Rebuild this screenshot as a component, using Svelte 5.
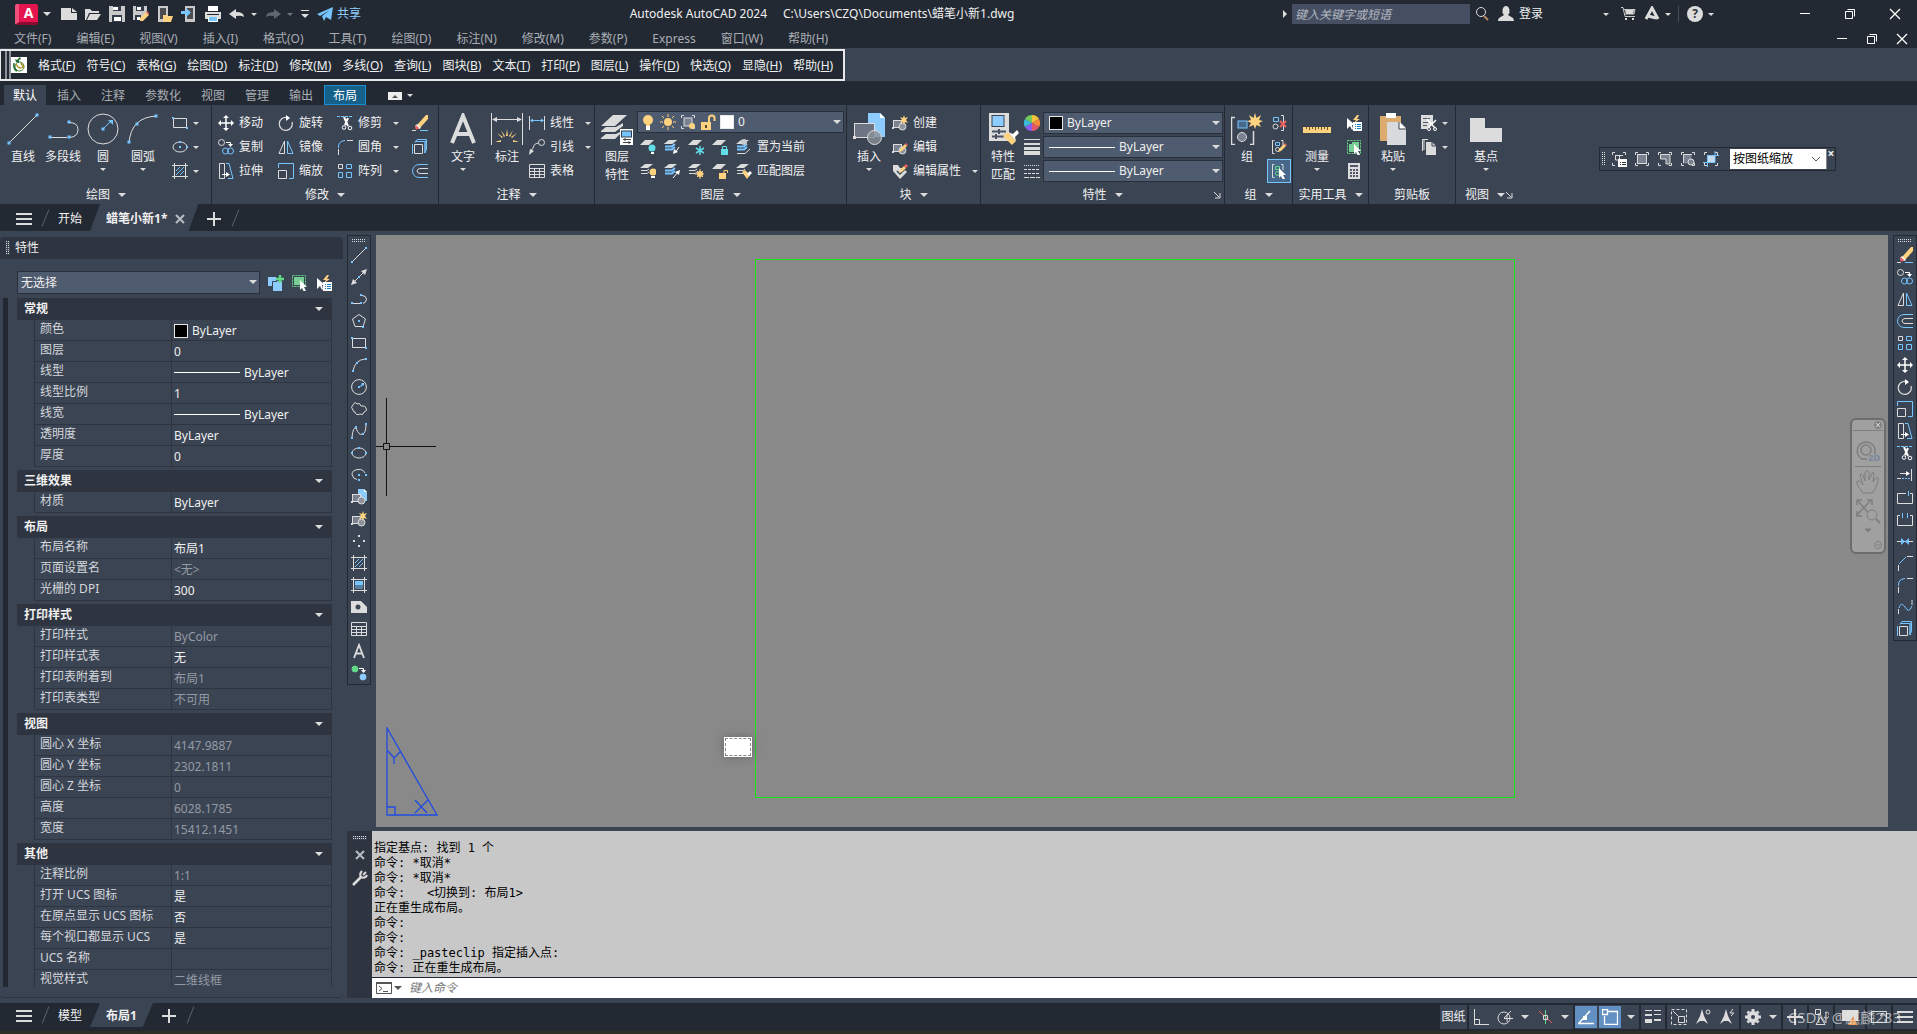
<script lang="ts">
    const W = '#dcdcdc';
    const B = '#76c5ff';
    const Y = '#ffd27f';
    const R = '#f06262';
    const G = '#62d986';
    const D = '#3b4453';

    // Small helpers for the icon table below
    const s = (d: string, color = W, width = 1) =>
        `<path d="${d}" fill="none" stroke="${color}" stroke-width="${width}"/>`;
    const dash = (d: string, pattern: string, color = W) =>
        `<path d="${d}" fill="none" stroke="${color}" stroke-dasharray="${pattern}"/>`;
    const f = (d: string, color = W) => `<path d="${d}" fill="${color}"/>`;
    const o = (cx: number, cy: number, r: number, color = W, fill = 'none') =>
        `<circle cx="${cx}" cy="${cy}" r="${r}" fill="${fill}" stroke="${color}"/>`;
    const dots = (...pts: number[][]) =>
        pts.map(([x, y]) => `<rect x="${x - 1}" y="${y - 1}" width="2" height="2" fill="${B}"/>`).join('');
    const bigDots = (...pts: number[][]) =>
        pts.map(([x, y]) => `<rect x="${x - 1.5}" y="${y - 1.5}" width="3" height="3" fill="${B}"/>`).join('');

    const cursor = f('M8 5V15L10 13L12 17L14 16L12 12H15Z', '#fff');
    const pencil = f('M8 10L13 5L15 7L10 12L7 13Z', Y) + f('M13 5L14 4L16 6L15 7Z', R);
    const star = f('M12 0L13 3L16 2L14 5L16 8L13 7L12 10L11 7L8 8L10 5L8 2L11 3Z', Y);
    const stack = f('M5 1H13L8 5H0Z') + s('M1 7.5H7L9 6M1 10.5H7L9 9');
    const blueStack = f('M5 1H13L8 5H0Z') + s('M1 7.5H8L11 5M1 10.5H8L11 8', B, 2);
    const sheet = f('M5 1H14L9 6H0Z');
    const brackets = s('M3.5 1.5H1.5V14.5H3.5M10 1.5H12V7');
    const bracketIcon = brackets + s('M4.5 3.5H8.5V6.5H4.5Z', B) + o(6.5, 10.5, 2);
    const block = `<rect x="1.5" y="5.5" width="8" height="7" fill="#7a8190" stroke="${W}"/><rect x="0" y="12" width="2" height="2" fill="${W}"/><circle cx="10.5" cy="11.5" r="3.5" fill="#8d929c" stroke="${W}"/>`;
    const corners = s('M1.5 4V1.5H4M12 1.5H14.5V4M14.5 12V14.5H12M4 14.5H1.5V12');
    const frame = s('M0 2.5H16M0 13.5H16M2.5 0V16M13.5 0V16');
    const quickSel = f('M11 0L7 5H10L8 8L14 4H11L13 0Z', Y) + f('M1 3V14L4 11L6 15L7 14L6 10H9Z', '#fff')
        + f('M7 7H16V16H7Z', '#fff') + s('M9 9.5H10M11 9.5H15M9 11.5H10M11 11.5H15M9 13.5H10M11 13.5H15', '#1c7fc4');
    const annoMan = f('M7 0L9 7L13 15L9 12H5L1 15L5 7Z');

    const icons: Record<string, string> = {
        // quick access toolbar
        newFile: f('M0 2H10V7H16V14H0Z') + f('M11 2L16 6H11Z'),
        open: f('M0 3H5L7 5H14V7H4L1 14H0Z') + f('M5 8H16L12 14H2Z'),
        save: f('M0 0H16V16H0Z', '#c9c9c9') + f('M4 0H12V5H4Z', '#333b48') + f('M3 9H13V16H3Z', '#333b48') + f('M4 1H9V4H4ZM5 11H12V15H5Z', '#fff'),
        saveAs: f('M0 0H14V6L7 14H0Z', '#c9c9c9') + f('M3 0H11V5H3Z', '#333b48') + f('M2 9H8V14H2Z', '#333b48') + f('M4 1H8V4H4ZM4 11H7V14H4Z', '#fff') + f('M7 12L13 6L16 9L10 15L7 15Z', Y) + f('M13 6L14 5L16 7L16 9Z', R),
        openWeb: f('M1 0H11V16H1Z', '#c9c9c9') + f('M3 2H9V13H3Z', '#4c4c50') + f('M6 9H10L11 10H16L14 16H6Z', Y),
        saveWeb: f('M4 0H14V16H4Z', '#c9c9c9') + f('M6 2H12V13H6Z', '#4c4c50') + f('M0 5H5V2L10 6.5L5 11V8H0Z', B),
        print: f('M3 0H13V5H3Z', '#fff') + f('M0 6H16V13H0Z') + f('M2 8H14V9H2Z', '#222933') + f('M3 11H13V16H3Z', B) + s('M3.5 11V15.5H12.5V11', '#fff'),
        undo: f('M0 8L7 3V6Q15 6 15 11Q12 9 7 10V13Z'),
        redo: f('M16 8L9 3V6Q1 6 1 11Q4 9 9 10V13Z', '#5f6670'),
        share: f('M0 8L16 1L14 14L9 11L7 15L5 10L13 4L3 10Z', B),
        search: o(6, 6, 4.5) + s('M9 10L13 14', '#b58a62', 2),
        user: f('M8 0A4 5 0 0 1 10 9L15 12Q16 14 16 15H0Q0 13 1 12L6 9A4 5 0 0 1 8 0Z'),
        cart: s('M0 1.5H2L4 10.5H14M3 3.5H14L13 8H4', '#c9c9c9') + f('M4 12H6V14H4ZM11 12H13V14H11ZM4 4H13L12 8H5Z'),
        autodesk: s('M2 13L8 2L14 13M4 10L12 12', W, 3),
        min: s('M3 7.5H13', '#fff'),
        restore: s('M3.5 5.5H10.5V12.5H3.5ZM5.5 3.5H12.5V10.5', '#fff'),
        close: s('M3 3L13 13M13 3L3 13', '#fff', 1.3),
        menu: s('M0 3H16M0 8H16M0 13H16', W, 2),
        plus: s('M1 8H15M8 1V15', W, 2),
        x: s('M4 4L12 12M12 4L4 12', '#b8bdc4', 2),
        macro: f('M0 0H16V16H0Z', '#fff') + o(8.5, 9.5, 4.5, '#2f7d32') + s('M5 7Q8 13 12 10M10 6L13 11', '#b09a2a', 1.5) + f('M9 0L6 3L4 2L5 5L8 6L8 3L10 2Z', '#1d6b2d') + s('M3 6Q2 12 6 14', '#1d6b2d', 1.5),

        // draw, large
        lineBig: s('M2 30L30 2') + bigDots([2, 30], [30, 2]),
        plineBig: s('M3 24.5H20M22 9.5Q31 9.5 31 16.5Q31 24 22 24.5') + bigDots([3, 24], [22, 9], [22, 24]),
        circleBig: o(16, 16, 15) + s('M17 15L23 9', B) + f('M21 7H26V12Z', B) + bigDots([16, 16]),
        arcBig: s('M2 30Q4 4 30 3') + bigDots([2, 29], [10, 11], [29, 3]),
        // draw, small
        line: s('M1 15L15 1') + dots([1, 15], [15, 1]),
        xline: s('M3 13L13 3') + f('M0 16L2 10L6 14ZM16 0L10 2L14 6Z') + dots([8, 8]),
        pline: s('M2 12.5H9M11 4.5Q15 4.5 15.5 8Q15 12 12 12.5') + dots([1, 12], [10, 4], [10, 12]),
        polygon: s('M8 1.5L14.5 6L12 13.5H4L1.5 6Z') + dots([8, 8], [12, 14]),
        rect: s('M1.5 3.5H14.5V12.5H1.5Z') + dots([1, 3], [15, 13]),
        arc: s('M2 14Q4 3 14 2') + dots([2, 14], [6, 6], [15, 2]),
        circle: o(8, 8, 7.4) + f('M9 7L11 5L10 4H13V7L12 6L10 8Z', B) + dots([8, 8]),
        cloud: s('M2 9Q-1 6 2 4Q4 0 6 3Q9 1 10 5Q14 4 15 7Q17 10 13 11Q12 15 9 13Q5 15 4 11Q2 11 2 9Z'),
        spline: s('M1 14Q2 4 5 5Q8 13 11 11Q15 11 15 1') + dots([1, 15], [5, 4], [12, 11], [15, 1]),
        ellipse: '<ellipse cx="8" cy="8" rx="7" ry="5" fill="none" stroke="#dcdcdc"/>' + dots([1, 8], [8, 3], [15, 8]),
        ellipseMid: '<ellipse cx="8" cy="8" rx="7" ry="5" fill="none" stroke="#dcdcdc"/>' + dots([8, 3], [8, 8], [15, 8]),
        ellipseArc: s('M14 6Q12 2 7 2.5Q1 3 1 7.5Q2 12 6 12.5') + dots([8, 8], [15, 8], [8, 13]),
        insert: f('M7 0H13L16 3V12H7Z', '#8cccff') + f('M13 0L16 3H13Z', '#fff') + block,
        create: block + star,
        editBlock: block + pencil,
        editAttr: f('M1 2H6L8 5L11 5L15 9L8 16L1 8Z') + s('M5 8L8 11L13 6', D, 1.5) + f('M8 7L12 3L14 5L10 9L7 10Z', Y) + f('M12 3L14 1L16 3L14 5Z', R),
        point: f('M7 2H9V4H7ZM2 7H4V9H2ZM12 7H14V9H12ZM7 12H9V14H7Z'),
        hatch: frame + s('M4 8L8 4M4 12L12 4M8 12L12 8', B),
        gradient: f('M4 4H12V8H4Z', B) + f('M4 8H12V12H4Z', '#587f9f') + frame,
        region: f('M0 2H10L16 8V14H0Z') + `<circle cx="7" cy="8" r="2.5" fill="${D}"/>`,
        table: s('M0.5 1.5H15.5V14.5H0.5ZM0 5.5H16M0 8.5H16M0 11.5H16M5.5 5V15M10.5 5V15'),
        textA: s('M3 15L8 2L13 15M5 10.5H11', W, 1.8),
        addSel: o(4, 4, 3, G, G) + o(12, 12, 3, '#8cccff', '#8cccff') + s('M8 3.5H12.5V6', '#fff') + f('M10 5H15L12.5 8Z', '#fff'),

        // modify
        move: s('M2 8H14M8 2V14', '#fff', 1.5) + f('M0 8L3 5V11ZM16 8L13 5V11ZM8 0L5 3H11ZM8 16L5 13H11Z', '#fff'),
        copy: o(3.5, 3.5, 3) + s('M8 3.5H12.5V5', '#fff') + f('M10 5H15L12.5 8Z', '#fff') + o(7.5, 12, 3, B) + o(12.5, 12, 3, B),
        rotate: s('M9 2.5A6.5 6.5 0 1 0 14 7', W, 1.2) + f('M8 0L12 3L8 6Z', '#fff'),
        mirror: s('M6.5 2V14.5H1Z') + s('M9.5 2V14.5H15Z', B),
        stretch: s('M1.5 0.5H6.5V15.5H1.5Z') + s('M8 0.5H11L15 15.5H10', B) + s('M4 11.5H9', '#fff') + f('M8 9L12 11.5L8 14Z', '#fff'),
        scale: s('M0.5 5V0.5H15.5V15.5H11', B) + s('M0.5 7.5H8.5V15.5H0.5Z'),
        trim: dash('M0 1.5H16', '3 1', B) + s('M7 2L11 11M11 3L8 10', '#fff', 2) + o(7, 12.5, 1.8, '#fff') + o(13, 13, 1.8, '#fff'),
        fillet: s('M1.5 9Q1 2 8 1.5', B) + s('M10 1.5H16M1.5 10V16'),
        chamfer: s('M2 9L9 2', B) + s('M10 1.5H16M1.5 10V16'),
        array: s('M1.5 1.5H5.5V5.5H1.5Z') + s('M9.5 1.5H14.5V5.5H9.5ZM1.5 9.5H5.5V14.5H1.5ZM9.5 9.5H14.5V14.5H9.5Z', B),
        erase: f('M5 10L14 0H16V4L8 13Z', Y) + f('M5 9L9 13L7 14L3 11Z', '#fff') + f('M4 10L7 13Q5 16 3 13Z', R) + s('M0 15.5H4') + s('M8 15.5H16', B),
        explode: s('M2.5 5.5H10.5V14.5H2.5Z') + s('M0.5 15V5M3 3.5L5 0.5H14.5V10L13 14V4.5L14.5 1M3 2.5H13V14', B),
        offset: s('M16 1.5H7Q1 2 0.5 8Q1 14 7 14.5H16', B) + s('M16 5.5H8Q5 6 5 8Q5 10 8 10.5H16'),
        extend: s('M14.5 2V14M3 6.5H10') + f('M9 4L13 6.5L9 9Z', '#fff') + s('M0 11.5H4') + dash('M5 11.5H13', '2 1', B),
        breakPt: s('M9 4.5H0.5V14.5H15.5V4.5H13') + s('M11.5 2V7', B),
        breakTwo: s('M3 4.5H0.5V14.5H15.5V4.5H13') + s('M5.5 2V7M10.5 2V7', B),
        join: s('M0 8.5H16') + f('M4 5L8 8.5L4 12ZM12 5L8 8.5L12 12Z', B),
        blend: s('M1.5 15V10M15 1V6') + s('M2 9Q4 2 8 8Q12 15 15 7', B),

        // annotate
        textBig: s('M5 30L16 3L27 30M9 21H23', W, 4),
        dimBig: s('M0.5 0V32M31.5 0V32M2 6.5H30') + f('M1 6.5L6 4V9ZM31 6.5L26 4V9Z') + f('M15 23L16 16L17 23ZM6 20L12 24L11 25ZM26 20L20 24L21 25ZM4 29L10 27V29ZM28 29L22 27V29ZM10 17L14 23L13 24ZM22 17L18 23L19 24Z', Y),
        linear: s('M0.5 1V15M15.5 1V15') + s('M2 5.5H14', B) + f('M1 5.5L4 3.5V7.5ZM15 5.5L12 3.5V7.5Z', B),
        leader: o(12.5, 3.5, 3) + s('M9.5 4.5Q6 3 4 9L1 13') + f('M0 16L1 10L5 12Z'),

        // layers
        layerBig: f('M12 2H26L14 13H0ZM0 18L5 14H15L22 10V13L14 19H0ZM0 25L5 21H15L19 19V21L14 26H0Z') + f('M19 16H32V32H19Z', '#fff') + `<rect x="20.5" y="18" width="10" height="6" fill="${B}" stroke="#333b48"/>` + s('M22 26.5H30M22 29.5H30M24 25V28M28 28V31', '#444'),
        bulb: `<circle cx="8" cy="6" r="5" fill="${Y}"/>` + f('M6 10H10V12H6Z', Y) + f('M6 12H10V16H6Z', '#fff'),
        sun: `<circle cx="8" cy="8" r="4" fill="${Y}"/>` + s('M8 0V3M8 13V16M0 8H3M13 8H16M2 2L4 4M12 12L14 14M14 2L12 4M2 14L4 12', Y),
        vpSun: corners + `<rect x="4" y="4" width="8" height="8" fill="#7a8190" stroke="${W}"/><circle cx="12" cy="12" r="3" fill="${Y}"/>`,
        lockOpen: f('M1 8H11V16H1Z', Y) + s('M9 9V4Q9 1.5 12 1.5Q14.5 1.5 14.5 4V7', Y, 2) + f('M5 11H7V14H5Z', '#5a4a25'),
        layOff: sheet + '<circle cx="12" cy="9" r="3.5" fill="#62dce8"/>' + f('M11 13H14V15H11Z', '#fff'),
        layIso: stack + blueStack + s('M15 8L11 14', '#fff') + f('M9 15L10 10L14 13Z', '#fff'),
        layFreeze: sheet + s('M12 7V16M8 9L16 14M16 9L8 14', '#62dce8', 1.5),
        layLock: sheet + f('M9 10H16V16H9Z', '#62dce8') + s('M10.5 10V7.5H14.5V10', '#62dce8'),
        layCur: blueStack + s('M1 14.5H9L14 10') + '<circle cx="8" cy="3" r="3" fill="#c8ccd2"/>',
        layOn: stack + `<circle cx="13" cy="9" r="3.5" fill="${Y}"/>` + f('M11 13H15V15H11Z', '#fff'),
        layUniso: blueStack + s('M9 15L14 9', '#fff') + f('M16 7L15 12L11 9Z', '#fff'),
        layThaw: stack + `<circle cx="12" cy="11" r="3" fill="${Y}"/>` + s('M12 6V16M7 11H16M9 8L15 14M15 8L9 14', Y),
        layUnlock: sheet + f('M7 10H14V16H7Z', Y) + s('M12 10V7.5H15.5V10', Y),
        layMatch: stack + f('M6 9L9 7L14 12L11 16Z', Y) + f('M11 11L14 8L16 10L13 13Z', '#fff'),

        // block, properties
        insertBig: f('M15 0H27L32 5V24H15Z', '#8cccff') + f('M27 0L32 5H27Z', '#fff') + `<rect x="1.5" y="10.5" width="20" height="14" fill="#6d7584" stroke="${W}"/><rect x="0" y="23" width="3" height="3" fill="${W}"/><circle cx="21.5" cy="24.5" r="7" fill="#8a9099" fill-opacity=".8" stroke="${W}"/>`,
        matchBig: f('M2 0H22V28H2Z') + '<rect x="5" y="2.5" width="12" height="11" fill="#8cccff" stroke="#3b4453"/>' + s('M5 18.5H11M13 18.5H19M5 23.5H8M10 23.5H17M12 16V21M9 21V26', '#4a5361', 2) + f('M16 23L21 19L29 28L25 32Z', Y) + f('M21 19L26 21L30 17L32 20L28 24L29 28Z', '#fff'),
        wheel: f('M8 8V0A8 8 0 0 1 15 4Z', '#f7c33c') + f('M8 8L15 4A8 8 0 0 1 15 12Z', '#f58a3c') + f('M8 8L15 12A8 8 0 0 1 8 16Z', '#e5586b') + f('M8 8V16A8 8 0 0 1 1 12Z', '#8d5cf0') + f('M8 8L1 12A8 8 0 0 1 1 4Z', '#3cb8d8') + f('M8 8L1 4A8 8 0 0 1 8 0Z', '#74c95c'),
        lweight: s('M0 0.5H16') + s('M0 5H16', W, 2) + s('M0 9.5H16', W, 3) + s('M0 14H16', W, 4),
        ltype: dash('M0 2.5H16', '1 1') + dash('M0 6.5H16M0 10.5H16', '3 1') + dash('M0 14.5H16', '5 1'),

        // group, utilities, clipboard, view
        groupBig: s('M4 4.5H0.5V31.5H4M19 31.5H22.5V18', W, 1.5) + `<rect x="7" y="8" width="9" height="7" fill="#47688a" stroke="${B}"/><circle cx="11" cy="24" r="4.5" fill="#7a8190" stroke="${W}"/>` + f('M24 0L25.5 5L30 2L28 7L32 8L28 10L30 14L25.5 12L24 16L22.5 12L18 14L20 10L16 8L20 7L18 2L22.5 5Z', Y),
        ungroup: s('M2.5 2.5H7.5V6.5H2.5Z', B) + o(4.5, 11.5, 2.5) + s('M10 0.5H12.5V15.5H10') + s('M9 6L15 12M15 6L9 12', R, 2),
        groupEdit: bracketIcon + pencil,
        groupSel: brackets + s('M4.5 3.5H8.5V6.5H4.5Z', G) + o(6.5, 10.5, 2, G) + cursor,
        rulerBig: f('M2 14H30V20H2Z', Y) + s('M5.5 14V16M8.5 14V17M11.5 14V16M14.5 14V17M17.5 14V16M20.5 14V17M23.5 14V16M26.5 14V17', '#6b5524'),
        quickSel,
        selectAll: `<rect x="1.5" y="1.5" width="13" height="13" fill="none" stroke="${G}" stroke-dasharray="2 1"/>` + f('M3 5H6V3H13V10H10V13H3Z', '#78cf95') + cursor,
        calc: f('M2 0H14V16H2Z') + f('M4 2H12V4H4ZM4 6H6V8H4ZM7 6H9V8H7ZM10 6H12V8H10ZM4 9H6V11H4ZM7 9H9V11H7ZM10 9H12V11H10ZM4 12H6V14H4ZM7 12H9V14H7ZM10 12H12V14H10Z', '#4f5969'),
        pasteBig: f('M3 3H24V28H3Z', '#dbab70') + f('M9 0H19V5H9Z', '#fff') + f('M10 9H23L29 15V32H10Z', '#d8dade') + f('M22 9L29 16H22Z', '#fff') + s('M22 9V16H29', D),
        cut: f('M0 0H12V8L6 14H0Z') + s('M2 3.5H9M2 7.5H7M2 10.5H6', '#4f5969') + s('M6 4L14 13M15 5L8 12', '#fff', 1.5) + o(8, 14, 1.5, '#fff') + o(14, 14, 1.5, '#fff'),
        copyClip: s('M1.5 12V0.5H7M3 1V11') + f('M5 3H11L15 7V16H5Z') + s('M11 3V7H15', D),
        baseBig: f('M0 5H15V15H32V29H0Z'),

        // palette header
        pickAdd: f('M0 2H8V11H0Z', '#8cccff') + f('M5 6H14V16H5Z', '#8cccff') + s('M4.5 11V6.5H9', D) + s('M12 0V8M8 4H16', G, 2.5),
        selectObj: `<rect x=".5" y=".5" width="13" height="11" fill="none" stroke="${G}" stroke-dasharray="2 1"/>` + f('M2 2H12V10H2Z', '#78cf95') + cursor,

        // viewport toolbar
        vpDialog: corners + s('M4 4.5H12M4.5 4V9H8M8.5 4V8') + f('M7 8H16V16H7Z', '#fff') + s('M9 11.5H10M11 11.5H15M9 13.5H10M11 13.5H15', '#333'),
        vpSingle: corners + `<rect x="3.5" y="3.5" width="9" height="9" fill="#7a8190" stroke="${W}"/>`,
        vpPoly: corners + `<path d="M3.5 3.5H13V13H9V8H3.5Z" fill="#7a8190" stroke="${W}"/>`,
        vpObj: corners + '<rect x="3.5" y="3.5" width="8" height="9" fill="#7a8190"/>' + s('M3.5 12V3.5H12') + o(11, 11, 3, W, '#7a8190'),
        vpClip: corners + f('M4 4H12V12H4Z', '#c5dcf0') + s('M0 11.5H12V0M4.5 16V4.5H16', B),
        chevron: s('M4 6L8 10L12 6', '#555'),

        // status bar
        ortho: s('M1.5 0V15.5H16M1.5 10.5H6.5V15'),
        polar: o(7, 9, 6) + s('M7 9.5H16M7 9L14 2') + s('M10 5.5V13'),
        iso: s('M2 2L15 14', R) + s('M8.5 1V15', G) + s('M6.5 6.5H10.5V10.5H6.5Z'),
        otrack: s('M0 14.5H16M1 14L12 2', '#fff', 1.5) + f('M5 7H9V11H5Z', '#fff'),
        osnap: s('M6 2.5H15.5V15.5H2.5V7M0.5 0.5H5.5V5.5H0.5Z', '#fff', 1.3),
        lwt: s('M0 1.5H7M9 1.5H16') + s('M0 6H7', W, 2) + s('M9 5.5H16') + s('M0 12H7', W, 4) + s('M9 11H16', W, 2),
        selCycle: dash('M0.5 0.5H15.5V15.5H0.5Z', '3 2') + s('M7.5 7.5H13.5V13.5H7.5ZM2 2L7 7'),
        annoVis: annoMan + o(13, 3, 2),
        annoAuto: annoMan + s('M14 0L11 4H15L12 7'),
        gear: '<circle cx="8" cy="8" r="4" fill="none" stroke="#dcdcdc" stroke-width="4"/>' + s('M8 0V3M8 13V16M0 8H3M13 8H16M2.5 2.5L4 4M12 12L13.5 13.5M13.5 2.5L12 4M2.5 13.5L4 12', W, 3),
        cross: s('M0 8H16M8 0V16', W, 2),
        isolate: s('M2.5 0.5H7.5V5.5H2.5ZM7.5 8L12 15.5H3ZM12 3.5A3 3 0 1 1 11 8'),
        hw: f('M0 1H16V12H0Z') + f('M11 7L16 16H6Z', '#e79350'),
        clean: s('M0.5 2.5H15.5V13.5H0.5Z') + s('M9 7L13 4M10 4.5H13V7'),
        wrench: s('M1 15L9 7', W, 2.5) + s('M14 2L11 5M10 1Q7 4 9 7Q13 9 15 5', W, 2),
        prompt: s('M0.5 2.5H15.5V13.5H0.5Z', '#555') + s('M0 3H16', '#555', 2) + s('M3 6L6 8.5L3 11M7 11.5H12', '#555')
    };

    const quickAccess = ['newFile', 'open', 'save', 'saveAs', 'openWeb', 'saveWeb', 'print'];
    const menus = ['文件(F)', '编辑(E)', '视图(V)', '插入(I)', '格式(O)', '工具(T)', '绘图(D)', '标注(N)', '修改(M)', '参数(P)', 'Express', '窗口(W)', '帮助(H)'];
    const macroMenus = [
        ['格式', 'F'], ['符号', 'C'], ['表格', 'G'], ['绘图', 'D'], ['标注', 'D'], ['修改', 'M'], ['多线', 'O'], ['查询', 'L'],
        ['图块', 'B'], ['文本', 'T'], ['打印', 'P'], ['图层', 'L'], ['操作', 'D'], ['快选', 'Q'], ['显隐', 'H'], ['帮助', 'H']
    ];
    const tabs = ['默认', '插入', '注释', '参数化', '视图', '管理', '输出', '布局'];

    const drawTools = ['line', 'xline', 'pline', 'polygon', 'rect', 'arc', 'circle', 'cloud', 'spline', 'ellipse', 'ellipseArc', 'insert', 'create', 'point', 'hatch', 'gradient', 'region', 'table', 'textA', 'addSel'];
    const modifyTools = ['erase', 'copy', 'mirror', 'offset', 'array', 'move', 'rotate', 'scale', 'stretch', 'trim', 'extend', 'breakPt', 'breakTwo', 'join', 'chamfer', 'fillet', 'blend', 'explode'];

    type Row = { label: string; value: string; mark?: 'swatch' | 'line'; off?: boolean };
    const groups: { name: string; rows: Row[] }[] = [
        {
            name: '常规',
            rows: [
                { label: '颜色', value: 'ByLayer', mark: 'swatch' },
                { label: '图层', value: '0' },
                { label: '线型', value: 'ByLayer', mark: 'line' },
                { label: '线型比例', value: '1' },
                { label: '线宽', value: 'ByLayer', mark: 'line' },
                { label: '透明度', value: 'ByLayer' },
                { label: '厚度', value: '0' }
            ]
        },
        { name: '三维效果', rows: [{ label: '材质', value: 'ByLayer' }] },
        {
            name: '布局',
            rows: [
                { label: '布局名称', value: '布局1' },
                { label: '页面设置名', value: '<无>', off: true },
                { label: '光栅的 DPI', value: '300' }
            ]
        },
        {
            name: '打印样式',
            rows: [
                { label: '打印样式', value: 'ByColor', off: true },
                { label: '打印样式表', value: '无' },
                { label: '打印表附着到', value: '布局1', off: true },
                { label: '打印表类型', value: '不可用', off: true }
            ]
        },
        {
            name: '视图',
            rows: [
                { label: '圆心 X 坐标', value: '4147.9887', off: true },
                { label: '圆心 Y 坐标', value: '2302.1811', off: true },
                { label: '圆心 Z 坐标', value: '0', off: true },
                { label: '高度', value: '6028.1785', off: true },
                { label: '宽度', value: '15412.1451', off: true }
            ]
        },
        {
            name: '其他',
            rows: [
                { label: '注释比例', value: '1:1', off: true },
                { label: '打开 UCS 图标', value: '是' },
                { label: '在原点显示 UCS 图标', value: '否' },
                { label: '每个视口都显示 UCS', value: '是' },
                { label: 'UCS 名称', value: '' },
                { label: '视觉样式', value: '二维线框', off: true }
            ]
        }
    ];

    const history = [
        '指定基点: 找到 1 个',
        '命令: *取消*',
        '命令: *取消*',
        '命令:   <切换到: 布局1>',
        '正在重生成布局。',
        '命令:',
        '命令:',
        '命令: _pasteclip 指定插入点:',
        '命令: 正在重生成布局。'
    ].join('\n');

    let command = $state('');
    let keyword = $state('');
    let activeTab = $state('默认');
</script>

{#snippet icon(name: string, size = 16)}
    <svg width={size} height={size} viewBox="0 0 {size} {size}" aria-hidden="true">{@html icons[name]}</svg>
{/snippet}

{#snippet big(name: string, lines: string[], drop = false)}
    <button class="big">
        {@render icon(name, 32)}
        {#each lines as line}<span>{line}</span>{/each}
        {#if drop}<i class="arrow"></i>{/if}
    </button>
{/snippet}

{#snippet tool(name: string, label = '', drop = false)}
    <button class="tool" aria-label={label || name}>
        {@render icon(name)}
        {#if label}<span>{label}</span>{/if}
        {#if drop}<i class="arrow"></i>{/if}
    </button>
{/snippet}

{#snippet title(name: string, drop = true, launcher = false)}
    <div class="panel-title">
        <button>{name}{#if drop}<i class="arrow wide"></i>{/if}</button>
        {#if launcher}
            <button class="launcher" aria-label="{name}设置">
                <svg width="8" height="8" viewBox="0 0 8 8"><path d="M1 1L6 6M7 2V7H2" fill="none" stroke="#dcdcdc" /></svg>
            </button>
        {/if}
    </div>
{/snippet}

<div class="app">
    <header class="titlebar">
        <button class="logo" aria-label="应用程序菜单">A</button>
        <i class="arrow wide"></i>
        <div class="quick">
            {#each quickAccess as name}
                <button aria-label={name}>{@render icon(name)}</button>
            {/each}
            <button aria-label="undo">{@render icon('undo')}<i class="arrow"></i></button>
            <button aria-label="redo">{@render icon('redo')}<i class="arrow dim"></i></button>
            <button class="customize" aria-label="自定义"><i class="arrow wide"></i></button>
        </div>
        <button class="share">{@render icon('share')}共享</button>
        <h1><span>Autodesk AutoCAD 2024</span><span>C:\Users\CZQ\Documents\蜡笔小新1.dwg</span></h1>
        <i class="caret-right"></i>
        <input class="search" type="text" aria-label="搜索" placeholder="键入关键字或短语" bind:value={keyword} />
        <button aria-label="搜索">{@render icon('search')}</button>
        <button class="login">{@render icon('user')}登录<i class="arrow"></i></button>
        <button aria-label="购物车">{@render icon('cart')}</button>
        <button class="pair" aria-label="Autodesk App">{@render icon('autodesk')}<i class="arrow"></i></button>
        <button class="pair help" aria-label="帮助"><b>?</b><i class="arrow"></i></button>
        <div class="window">
            <button aria-label="最小化">{@render icon('min')}</button>
            <button aria-label="还原">{@render icon('restore')}</button>
            <button aria-label="关闭">{@render icon('close')}</button>
        </div>
    </header>

    <nav class="menubar">
        {#each menus as item}<button>{item}</button>{/each}
        <div class="window doc">
            <button aria-label="最小化文档">{@render icon('min')}</button>
            <button aria-label="还原文档">{@render icon('restore')}</button>
            <button aria-label="关闭文档">{@render icon('close')}</button>
        </div>
    </nav>

    <div class="macrobar">
        <div class="macros">
            {@render icon('macro')}
            {#each macroMenus as [name, key]}<button>{name}(<u>{key}</u>)</button>{/each}
        </div>
    </div>

    <nav class="tabs">
        {#each tabs as tab}
            <button class:active={activeTab === tab} class:layout={tab === '布局'} onclick={() => (activeTab = tab)}>{tab}</button>
        {/each}
        <span class="collapse"><i></i></span>
        <i class="arrow"></i>
    </nav>

    <div class="ribbon">
        <section class="draw">
            <div class="tools">
                {@render big('lineBig', ['直线'])}
                {@render big('plineBig', ['多段线'])}
                {@render big('circleBig', ['圆'], true)}
                {@render big('arcBig', ['圆弧'], true)}
                <div class="stack">
                    {@render tool('rect', '', true)}
                    {@render tool('ellipseMid', '', true)}
                    {@render tool('hatch', '', true)}
                </div>
            </div>
            {@render title('绘图')}
        </section>

        <section class="modify">
            <div class="tools">
                <div class="grid">
                    {@render tool('move', '移动')}
                    {@render tool('rotate', '旋转')}
                    {@render tool('trim', '修剪', true)}
                    {@render tool('erase')}
                    {@render tool('copy', '复制')}
                    {@render tool('mirror', '镜像')}
                    {@render tool('fillet', '圆角', true)}
                    {@render tool('explode')}
                    {@render tool('stretch', '拉伸')}
                    {@render tool('scale', '缩放')}
                    {@render tool('array', '阵列', true)}
                    {@render tool('offset')}
                </div>
            </div>
            {@render title('修改')}
        </section>

        <section class="annotate">
            <div class="tools">
                {@render big('textBig', ['文字'], true)}
                {@render big('dimBig', ['标注'])}
                <div class="stack">
                    {@render tool('linear', '线性', true)}
                    {@render tool('leader', '引线', true)}
                    {@render tool('table', '表格')}
                </div>
            </div>
            {@render title('注释')}
        </section>

        <section class="layers">
            <div class="tools">
                {@render big('layerBig', ['图层', '特性'])}
                <div class="layer-side">
                    <div class="combo">
                        {@render icon('bulb')}{@render icon('sun')}{@render icon('vpSun')}{@render icon('lockOpen')}
                        <i class="swatch white"></i>
                        <select aria-label="图层"><option>0</option></select>
                    </div>
                    <div class="grid">
                        {@render tool('layOff')}
                        {@render tool('layIso')}
                        {@render tool('layFreeze')}
                        {@render tool('layLock')}
                        {@render tool('layCur', '置为当前')}
                        {@render tool('layOn')}
                        {@render tool('layUniso')}
                        {@render tool('layThaw')}
                        {@render tool('layUnlock')}
                        {@render tool('layMatch', '匹配图层')}
                    </div>
                </div>
            </div>
            {@render title('图层')}
        </section>

        <section class="block">
            <div class="tools">
                {@render big('insertBig', ['插入'], true)}
                <div class="stack">
                    {@render tool('create', '创建')}
                    {@render tool('editBlock', '编辑')}
                    {@render tool('editAttr', '编辑属性', true)}
                </div>
            </div>
            {@render title('块')}
        </section>

        <section class="props">
            <div class="tools">
                {@render big('matchBig', ['特性', '匹配'])}
                <div class="prop-rows">
                    {@render icon('wheel')}
                    <div class="combo"><i class="swatch"></i><select aria-label="颜色"><option>ByLayer</option></select></div>
                    {@render icon('lweight')}
                    <div class="combo"><i class="rule"></i><select aria-label="线宽"><option>ByLayer</option></select></div>
                    {@render icon('ltype')}
                    <div class="combo"><i class="rule"></i><select aria-label="线型"><option>ByLayer</option></select></div>
                </div>
            </div>
            {@render title('特性', true, true)}
        </section>

        <section class="group">
            <div class="tools">
                {@render big('groupBig', ['组'])}
                <div class="stack square">
                    {@render tool('ungroup')}
                    {@render tool('groupEdit')}
                    <button class="tool on" aria-label="组选择">{@render icon('groupSel')}</button>
                </div>
            </div>
            {@render title('组')}
        </section>

        <section class="utils">
            <div class="tools">
                {@render big('rulerBig', ['测量'], true)}
                <div class="stack square">
                    {@render tool('quickSel')}
                    {@render tool('selectAll')}
                    {@render tool('calc')}
                </div>
            </div>
            {@render title('实用工具')}
        </section>

        <section class="clip">
            <div class="tools">
                {@render big('pasteBig', ['粘贴'], true)}
                <div class="stack">
                    {@render tool('cut', '', true)}
                    {@render tool('copyClip', '', true)}
                </div>
            </div>
            {@render title('剪贴板', false)}
        </section>

        <section class="view">
            <div class="tools">{@render big('baseBig', ['基点'], true)}</div>
            {@render title('视图', true, true)}
        </section>

        <div class="viewports">
            <i class="grip tall"></i>
            {#each ['vpDialog', 'vpSingle', 'vpPoly', 'vpObj', 'vpClip'] as name}
                <button aria-label={name}>{@render icon(name)}</button>
            {/each}
            <div class="scale">
                <select aria-label="视口比例"><option>按图纸缩放</option></select>
                {@render icon('chevron')}
            </div>
            <button class="vp-close" aria-label="关闭工具栏">×</button>
        </div>
    </div>

    <nav class="files">
        <button aria-label="文件菜单">{@render icon('menu')}</button>
        <i class="slash"></i>
        <button>开始</button>
        <button class="file active">蜡笔小新1*{@render icon('x')}</button>
        <button aria-label="新建">{@render icon('plus')}</button>
        <i class="slash"></i>
    </nav>

    <main>
        <aside class="palette">
            <h2><i class="grip tall"></i>特性</h2>
            <div class="pick">
                <div class="combo"><select aria-label="选择"><option>无选择</option></select></div>
                <button aria-label="切换 PICKADD">{@render icon('pickAdd')}</button>
                <button aria-label="选择对象">{@render icon('selectObj')}</button>
                <button aria-label="快速选择">{@render icon('quickSel')}</button>
            </div>
            <div class="list">
                {#each groups as group (group.name)}
                    <h3>{group.name}<i class="arrow wide"></i></h3>
                    <table>
                        <tbody>
                            {#each group.rows as row (row.label)}
                                <tr>
                                    <th scope="row">{row.label}</th>
                                    <td class:off={row.off}>
                                        <div>
                                            {#if row.mark === 'swatch'}<i class="swatch"></i>{/if}
                                            {#if row.mark === 'line'}<i class="rule"></i>{/if}
                                            {row.value}
                                        </div>
                                    </td>
                                </tr>
                            {/each}
                        </tbody>
                    </table>
                {/each}
            </div>
        </aside>

        <div class="work">
            <div class="stage">
                <div class="toolbar">
                    <i class="grip"></i>
                    {#each drawTools as name}<button aria-label={name}>{@render icon(name)}</button>{/each}
                </div>
                <div class="canvas">
                    <div class="viewport"></div>
                    <div class="paper"><i></i></div>
                    <svg class="crosshair" width="60" height="98" viewBox="0 0 60 98">
                        <path d="M0 48.5H7M14 48.5H60M10.5 0V45M10.5 52V98M7.5 45.5H13.5V51.5H7.5Z" fill="none" stroke="#111" />
                    </svg>
                    <svg class="ucs" width="52" height="90" viewBox="0 0 52 90">
                        <path d="M1 1V88H51ZM1 80H9V88M2 24L8 31L15 24M8 31V37M29 73L41 86M42 73L29 86" fill="none" stroke="#1f4be0" stroke-width="1.3" />
                    </svg>
                    <div class="navbar">
                        <svg width="32" height="132" viewBox="0 0 32 132" fill="none" stroke="#7e7e7e">
                            <circle cx="26" cy="5" r="3.5" fill="#888" />
                            <path d="M24 3L28 7M28 3L24 7" stroke="#ccc" />
                            <path d="M1 10.500H31M3 46.500H29" />
                            <path d="M15 39H10A9 9 0 1 1 23 29V34" stroke-width="1.500" />
                            <circle cx="14" cy="30" r="5" stroke-width="1.500" />
                            <path d="M11 73Q3 63 5 61Q8 60 11 65L8 55Q9 52 11 55L13 61V52Q15 49 17 52V60L20 53Q22 51 22 55L21 62L24 58Q27 56 26 61Q23 73 19 73Z" />
                            <path d="M6 81L19 96M19 80L5 95M5 85V80H10M15 80H20V85M5 91V96H10" stroke-width="1.500" />
                            <circle cx="20" cy="95" r="5" fill="#a0a0a0" />
                            <path d="M24 99L28 103" stroke-width="2" />
                            <path d="M13 109H19L16 112Z" fill="#7e7e7e" />
                            <circle cx="26" cy="125" r="3.5" />
                            <path d="M24 125H28" />
                        </svg>
                        <span>2D</span>
                    </div>
                </div>
                <div class="toolbar">
                    <i class="grip"></i>
                    {#each modifyTools as name}<button aria-label={name}>{@render icon(name)}</button>{/each}
                </div>
            </div>

            <div class="command">
                <div class="command-side">
                    <i class="grip"></i>
                    <button aria-label="关闭">{@render icon('x')}</button>
                    <button aria-label="自定义">{@render icon('wrench')}</button>
                </div>
                <div class="command-main">
                    <pre>{history}</pre>
                    <label>
                        {@render icon('prompt')}<i class="arrow wide"></i>
                        <input type="text" aria-label="命令" placeholder="键入命令" bind:value={command} />
                    </label>
                </div>
            </div>
        </div>
    </main>

    <footer>
        <nav class="files">
            <button aria-label="布局菜单">{@render icon('menu')}</button>
            <i class="slash"></i>
            <button>模型</button>
            <button class="file active">布局1</button>
            <button aria-label="新建布局">{@render icon('plus')}</button>
            <i class="slash"></i>
        </nav>
        <div class="status">
            <div><button class="space">图纸</button></div>
            <div>
                <button aria-label="正交">{@render icon('ortho')}</button>
                <button aria-label="极轴">{@render icon('polar')}</button>
                <button class="drop" aria-label="极轴设置"><i class="arrow wide"></i></button>
                <button aria-label="等轴测">{@render icon('iso')}</button>
                <button class="drop" aria-label="等轴测设置"><i class="arrow wide"></i></button>
            </div>
            <div>
                <button class="on" aria-label="对象捕捉追踪">{@render icon('otrack')}</button>
                <button class="on" aria-label="对象捕捉">{@render icon('osnap')}</button>
                <button class="drop" aria-label="捕捉设置"><i class="arrow wide"></i></button>
            </div>
            <div><button aria-label="线宽">{@render icon('lwt')}</button></div>
            <div>
                <button aria-label="选择循环">{@render icon('selCycle')}</button>
                <button aria-label="注释可见性">{@render icon('annoVis')}</button>
                <button aria-label="自动缩放">{@render icon('annoAuto')}</button>
            </div>
            <div>
                <button aria-label="切换工作空间">{@render icon('gear')}</button>
                <button class="drop" aria-label="工作空间"><i class="arrow wide"></i></button>
            </div>
            <div><button aria-label="注释监视器">{@render icon('cross')}</button></div>
            <div><button aria-label="隔离对象">{@render icon('isolate')}</button></div>
            <div><button class="broad" aria-label="硬件加速">{@render icon('hw')}</button></div>
            <div><button aria-label="全屏显示">{@render icon('clean')}</button></div>
            <div><button aria-label="自定义">{@render icon('menu')}</button></div>
            <span class="watermark">CSDN @麒麟283</span>
        </div>
    </footer>
</div>

<style>
    :global(body) {
        margin: 0;
        background: #222933;
    }

    .app {
        --frame: #222933;
        --panel: #3b4453;
        --dark: #2e3440;
        --field: #4f5b6e;
        display: flex;
        flex-direction: column;
        height: 100vh;
        overflow: hidden;
        box-sizing: border-box;
        border-bottom: 3px solid #2b2f26;
        background: var(--frame);
        color: #f0f0f0;
        font: 12px/18px "Noto Sans", "Noto Sans CJK SC", sans-serif;
        white-space: nowrap;
    }

    button, select, input {
        margin: 0;
        padding: 0;
        border: 0;
        background: none;
        color: inherit;
        font: inherit;
    }

    button {
        display: flex;
        align-items: center;
        justify-content: center;
    }

    svg {
        display: block;
        flex: none;
    }

    .arrow {
        flex: none;
        border: 3px solid transparent;
        border-top-color: #dcdcdc;
        border-bottom: 0;
    }

    .arrow.wide {
        border-width: 4px;
        border-bottom: 0;
    }

    .arrow.dim {
        border-top-color: #70767f;
    }

    .grip {
        flex: none;
        width: 14px;
        height: 4px;
        background:
            repeating-linear-gradient(90deg, transparent 0 1px, var(--panel) 1px 2px),
            repeating-linear-gradient(#dcdcdc 0 1px, var(--panel) 1px 2px);
    }

    .grip.tall {
        width: 4px;
        height: 14px;
    }

    .combo {
        display: flex;
        align-items: center;
        position: relative;
        box-sizing: border-box;
        height: 22px;
        padding: 0 4px;
        border: 1px solid #2a303b;
        background: var(--field);
    }

    .combo::after {
        content: "";
        position: absolute;
        right: 2px;
        top: 8px;
        border: 4px solid transparent;
        border-top-color: #dcdcdc;
        border-bottom: 0;
        pointer-events: none;
    }

    .combo select {
        flex: 1;
        min-width: 0;
        appearance: none;
    }

    .swatch {
        flex: none;
        box-sizing: border-box;
        width: 14px;
        height: 14px;
        border: 1px solid #e8e8e8;
        background: #000;
    }

    .swatch.white {
        background: #fff;
    }

    .rule {
        flex: none;
        width: 66px;
        height: 1px;
        background: #fff;
    }

    /* Title bar */
    .titlebar {
        display: flex;
        align-items: center;
        flex: none;
        height: 28px;
        padding-left: 15px;
    }

    .logo {
        width: 23px;
        height: 21px;
        margin-right: 5px;
        border-radius: 2px;
        border-left: 4px solid #f0507a;
        border-bottom: 3px solid #8c0c30;
        background: #e5134e;
        color: #fff;
        font-size: 14px;
        font-weight: 700;
    }

    .quick {
        display: flex;
        align-items: center;
        gap: 8px;
        margin: 0 8px 0 10px;
    }

    .quick button {
        gap: 6px;
    }

    .customize {
        padding-top: 3px;
        border-top: 1px solid #dcdcdc;
    }

    .share {
        gap: 4px;
        color: #8fcfff;
    }

    h1 {
        display: flex;
        justify-content: center;
        gap: 16px;
        flex: 1;
        margin: 0;
        font-size: 12px;
        font-weight: 400;
    }

    .caret-right {
        border: 4px solid transparent;
        border-left-color: #dcdcdc;
        border-right: 0;
        margin-right: 5px;
    }

    .search {
        width: 178px;
        height: 20px;
        box-sizing: border-box;
        margin-right: 5px;
        padding: 0 3px;
        background: #454f61;
        font-style: italic;
    }

    .search::placeholder {
        color: #b4b9c2;
    }

    .login {
        gap: 5px;
        margin: 0 12px 0 7px;
    }

    .login .arrow {
        margin-left: 55px;
    }

    .pair {
        gap: 5px;
        margin-left: 7px;
    }

    .help {
        padding-left: 8px;
        border-left: 1px solid #454d5a;
    }

    .help b {
        width: 16px;
        border-radius: 8px;
        background: #dcdcdc;
        color: #333;
        line-height: 16px;
    }

    .window {
        display: flex;
        margin-left: 68px;
    }

    .window button {
        width: 45px;
    }

    .window.doc {
        margin-left: auto;
    }

    .window.doc button {
        width: 30px;
    }

    .menubar {
        display: flex;
        align-items: center;
        flex: none;
        gap: 25px;
        height: 20px;
        padding-left: 14px;
        color: #a9adb3;
    }

    .menubar button {
        padding-top: 2px;
    }

    .menubar .window button {
        color: #fff;
    }

    .macrobar {
        display: flex;
        flex: none;
        height: 33px;
        background: var(--panel);
    }

    .macros {
        display: flex;
        align-items: center;
        gap: 11px;
        box-sizing: border-box;
        height: 32px;
        margin-top: 1px;
        padding: 0 10px;
        border: 2px solid #e8e8e8;
        border-left-width: 1px;
        background: linear-gradient(to right, transparent 4px, #8d929a 4px 6px, transparent 6px 8px, #8d929a 8px 10px, transparent 10px), var(--frame);
    }

    .macros button {
        padding-top: 1px;
    }

    .tabs {
        display: flex;
        align-items: end;
        gap: 2px;
        flex: none;
        height: 24px;
        padding-left: 4px;
        color: #a9adb3;
    }

    .tabs button {
        box-sizing: border-box;
        height: 20px;
        padding: 2px 9px 0;
    }

    .tabs .active {
        background: var(--panel);
        color: #fff;
    }

    .tabs .layout {
        border: 1px solid #1a8fd0;
        background: #15618a;
        color: #fff;
        padding: 2px 8px 0;
    }

    .collapse {
        margin: 0 3px 5px 20px;
        padding: 3px 4px 2px;
        background: #eee;
    }

    .collapse i {
        display: block;
        border: 3px solid transparent;
        border-bottom-color: #555;
        border-top: 0;
    }

    .tabs .arrow {
        margin-bottom: 8px;
    }

    /* Ribbon */
    .ribbon {
        display: grid;
        grid-template-columns: 211px 227px 156px 252px 134px 244px 68px 76px 87px 60px 1fr;
        flex: none;
        height: 99px;
        padding-left: 1px;
        background: var(--panel);
    }

    .ribbon section {
        display: flex;
        flex-direction: column;
        min-width: 0;
        border-right: 1px solid var(--frame);
    }

    .ribbon .view {
        border-right: 0;
    }

    .tools {
        display: flex;
        flex: 1;
        align-items: start;
        padding: 6px 0 0 2px;
    }

    .panel-title {
        display: grid;
        grid-template-columns: 1fr auto 1fr;
        align-items: center;
        height: 18px;
        padding: 0 3px;
    }

    .panel-title button {
        grid-column: 2;
        gap: 8px;
    }

    .panel-title .launcher {
        grid-column: 3;
        justify-self: end;
    }

    .big {
        flex-direction: column;
        justify-content: start;
        min-width: 40px;
        padding-top: 2px;
    }

    .big span:first-of-type {
        margin-top: 3px;
    }

    .big .arrow {
        margin-top: 2px;
    }

    .tool {
        justify-content: start;
        gap: 5px;
        height: 24px;
    }

    .tool span + .arrow {
        margin-left: 6px;
    }

    .stack {
        display: flex;
        flex-direction: column;
    }

    .draw .stack {
        margin-left: 9px;
    }

    .modify .grid {
        display: grid;
        grid-template-columns: 60px 59px 75px 16px;
        padding-left: 4px;
    }

    .annotate .big, .utils .big, .clip .big {
        min-width: 44px;
    }

    .block .stack, .utils .stack {
        margin-left: 3px;
    }

    .clip .stack {
        margin-left: 6px;
    }

    .layer-side .combo {
        gap: 4px;
        width: 207px;
        padding-left: 2px;
    }

    .layer-side .grid {
        display: grid;
        grid-template-columns: repeat(4, 24px) auto;
        padding: 2px 0 0 3px;
    }

    .prop-rows {
        display: grid;
        grid-template-columns: 16px 180px;
        grid-auto-rows: 24px;
        align-items: center;
        gap: 0 3px;
        padding-left: 1px;
    }

    .prop-rows .combo {
        gap: 4px;
        padding-left: 5px;
    }

    .square .tool {
        justify-content: center;
        box-sizing: border-box;
        width: 24px;
    }

    .tool.on {
        border: 1px solid #76c5ff;
        background: #47688a;
    }

    .view .big {
        min-width: 56px;
    }

    .viewports {
        display: flex;
        align-items: center;
        justify-self: end;
        align-self: start;
        box-sizing: border-box;
        gap: 7px;
        height: 24px;
        margin: 42px 81px 0 0;
        padding-left: 2px;
        border: 1px solid var(--frame);
    }

    .viewports .grip {
        margin-right: -2px;
    }

    .scale {
        display: flex;
        align-items: center;
        width: 97px;
        height: 20px;
        margin-left: 4px;
        padding: 0 2px 0 3px;
        box-sizing: border-box;
        border-right: 1px solid #888;
        background: #fff;
    }

    .scale select {
        flex: 1;
        min-width: 0;
        appearance: none;
        color: #000;
    }

    .vp-close {
        align-self: start;
        width: 8px;
        margin-left: -7px;
        font-weight: 700;
        line-height: 12px;
    }

    /* File and layout tabs */
    .files {
        display: flex;
        align-items: center;
        flex: none;
        height: 27px;
        padding-left: 16px;
    }

    .files button {
        padding-top: 2px;
    }

    .slash {
        width: 1px;
        height: 18px;
        margin: 0 12px 0 13px;
        background: #5a616c;
        transform: rotate(22deg);
    }

    .files .file {
        gap: 5px;
        box-sizing: border-box;
        height: 100%;
        margin: 0 8px;
        padding: 2px 16px 0;
        background: var(--panel);
        clip-path: polygon(10px 0, 100% 0, calc(100% - 10px) 100%, 0 100%);
        font-weight: 700;
    }

    .file svg {
        margin-right: -6px;
    }

    main {
        display: flex;
        flex: 1;
        min-height: 0;
        background: var(--panel);
    }

    .palette {
        display: flex;
        flex-direction: column;
        width: 343px;
        margin: 6px 4px 5px 0;
        border-bottom: 1px solid var(--dark);
        border-radius: 0 0 4px 4px;
        box-sizing: border-box;
    }

    h2 {
        display: flex;
        align-items: center;
        gap: 5px;
        height: 22px;
        margin: 0 0 12px;
        padding-left: 6px;
        border-radius: 4px 4px 0 0;
        background: var(--dark);
        font-size: 12px;
        font-weight: 400;
    }

    .pick {
        display: flex;
        align-items: center;
        gap: 8px;
        margin: 0 0 4px 17px;
    }

    .pick .combo {
        width: 243px;
        height: 23px;
        padding: 0 3px;
    }

    .list {
        flex: 1;
        min-height: 0;
        overflow: hidden;
        margin: 0 11px 10px 3px;
        padding-left: 9px;
        border-left: 5px solid var(--frame);
    }

    h3 {
        display: flex;
        align-items: center;
        justify-content: space-between;
        height: 22px;
        margin: 0;
        padding: 0 9px 0 7px;
        background: var(--dark);
        font-size: 12px;
        font-weight: 700;
    }

    table {
        width: calc(100% - 17px);
        margin: 0 0 3px 17px;
        border-right: 1px solid var(--dark);
        border-spacing: 0;
        table-layout: fixed;
    }

    th, td {
        box-sizing: border-box;
        height: 21px;
        padding: 0 0 0 5px;
        border-bottom: 1px solid var(--dark);
        border-left: 1px solid var(--dark);
        font-weight: 400;
        line-height: 18px;
        text-align: left;
    }

    th {
        width: 137px;
        color: #d4d7dc;
        vertical-align: top;
    }

    td {
        padding-left: 2px;
        vertical-align: bottom;
    }

    td div {
        display: flex;
        align-items: center;
        gap: 4px;
        height: 19px;
    }

    .off {
        color: #949aa4;
    }

    .work {
        display: flex;
        flex-direction: column;
        flex: 1;
        gap: 4px;
        min-width: 0;
        padding: 4px 0 5px;
    }

    .stage {
        display: flex;
        align-items: start;
        flex: 1;
        gap: 5px;
        min-height: 0;
    }

    .toolbar {
        display: flex;
        flex-direction: column;
        align-items: center;
        box-sizing: border-box;
        width: 24px;
        padding-top: 3px;
        border: 1px solid var(--frame);
    }

    .toolbar .grip {
        margin-bottom: 1px;
    }

    .toolbar button {
        width: 22px;
        height: 22px;
    }

    .canvas {
        position: relative;
        align-self: stretch;
        flex: 1;
        overflow: hidden;
        background: #898989;
    }

    .viewport {
        position: absolute;
        left: 379px;
        right: 373px;
        top: 24px;
        bottom: 29px;
        border: 1px solid #18e818;
    }

    .paper {
        position: absolute;
        left: 348px;
        bottom: 70px;
        padding: 1px;
        background: #fff;
        box-shadow: 0 0 8px #666;
    }

    .paper i {
        display: block;
        width: 24px;
        height: 16px;
        border: 1px dashed #888;
    }

    .crosshair {
        position: absolute;
        left: 0;
        top: 163px;
    }

    .ucs {
        position: absolute;
        left: 10px;
        bottom: 10px;
    }

    .navbar {
        position: absolute;
        right: 2px;
        top: 183px;
        box-sizing: border-box;
        width: 36px;
        height: 136px;
        border: 2px solid #6c6c6c;
        border-radius: 6px;
        background: #a0a0a0;
    }

    .navbar span {
        position: absolute;
        right: 4px;
        top: 29px;
        color: #76869c;
        font-size: 9px;
        font-weight: 700;
    }

    .command {
        display: flex;
        flex: none;
        height: 167px;
    }

    .command-side {
        display: flex;
        flex-direction: column;
        align-items: center;
        gap: 7px;
        width: 25px;
        padding-top: 5px;
        background: var(--dark);
        box-sizing: border-box;
    }

    .command-main {
        display: flex;
        flex-direction: column;
        flex: 1;
        background: #c8c8c8;
        color: #000;
    }

    pre {
        flex: 1;
        margin: 0;
        padding: 10px 2px 0;
        font: 12px/15px "DejaVu Sans Mono", "Noto Sans CJK SC", monospace;
    }

    .command label {
        display: flex;
        align-items: center;
        gap: 2px;
        height: 20px;
        padding-left: 4px;
        border-top: 1px solid var(--frame);
        background: #fff;
    }

    .command .arrow {
        border-top-color: #555;
    }

    .command input {
        flex: 1;
        padding-left: 5px;
        font-style: italic;
    }

    .command input::placeholder {
        color: #777;
    }

    footer {
        display: flex;
        justify-content: space-between;
        flex: none;
        height: 28px;
    }

    footer .files {
        height: 24px;
    }

    .status {
        display: flex;
        align-items: center;
        gap: 2px;
        position: relative;
    }

    .status div {
        display: flex;
        height: 24px;
        background: var(--panel);
    }

    .status button {
        width: 24px;
    }

    .status .space {
        width: 27px;
    }

    .status .drop {
        width: 16px;
    }

    .status .broad {
        width: 30px;
    }

    .status .on {
        width: 22px;
        margin: 1px 2px 1px 0;
        background: #6390c2;
    }

    .watermark {
        position: absolute;
        right: 16px;
        color: rgba(230, 230, 230, 0.7);
        font-size: 15px;
    }
</style>
